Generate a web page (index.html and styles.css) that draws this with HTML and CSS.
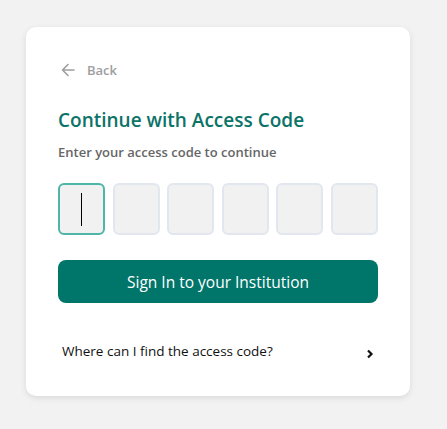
FILE: index.html
```html
<!DOCTYPE html>
<html>
<head>
<meta charset="utf-8">
<link rel="stylesheet" href="styles.css">
</head>
<body>
<div class="card">
  <div class="back">
    <svg class="back-icon" width="14" height="14" viewBox="0 0 14 14"><path d="M13 7H1.5M7 1.5L1.5 7L7 12.5" fill="none" stroke="#9e9e9e" stroke-width="1.6" stroke-linecap="round" stroke-linejoin="round"/></svg>
    <span class="back-text">Back</span>
  </div>
  <h1 class="title">Continue with Access Code</h1>
  <p class="subtitle">Enter your access code to continue</p>
  <div class="code">
    <div class="cell active"><span class="caret"></span></div>
    <div class="cell"></div>
    <div class="cell"></div>
    <div class="cell"></div>
    <div class="cell"></div>
    <div class="cell"></div>
  </div>
  <button class="btn">Sign In to your Institution</button>
  <div class="help">
    <span class="help-text">Where can I find the access code?</span>
    <svg class="chev" width="8" height="10" viewBox="0 0 8 10"><path d="M2 1.5L5.5 5L2 8.5" fill="none" stroke="#111" stroke-width="2.2"/></svg>
  </div>
</div>
</body>
</html>
```
FILE: styles.css
```css
* { box-sizing: border-box; }
html, body { margin: 0; padding: 0; }
body {
  background: #f2f2f2;
  font-family: "Open Sans", "Noto Sans", sans-serif;
  width: 447px;
  height: 429px;
  overflow: hidden;
}
.card {
  margin: 27px 0 0 26px;
  width: 384px;
  height: 369px;
  background: #fff;
  border-radius: 10px;
  box-shadow: 0 2px 6px rgba(0,0,0,0.10);
  padding: 32px 32px 0 32px;
}
.back {
  display: flex;
  align-items: center;
  height: 22px;
  padding-left: 3px;
}
.back-icon { display: block; }
.back-text {
  margin-left: 12px;
  font-size: 13px;
  font-weight: 600;
  color: #9e9e9e;
}
.title {
  margin: 26px 0 0 0;
  font-size: 19px;
  line-height: 26px;
  font-weight: 600;
  color: #0b7367;
}
.subtitle {
  margin: 9px 0 0 0;
  font-size: 13px;
  line-height: 20px;
  font-weight: 600;
  color: #666;
}
.code {
  margin-top: 21px;
  display: flex;
  gap: 7.6px;
}
.cell {
  width: 47px;
  height: 52px;
  border: 2px solid #e2e7ef;
  background: #f1f1f1;
  border-radius: 6px;
  display: flex;
  align-items: center;
  justify-content: center;
}
.cell.active { border-color: #4db6a8; }
.caret {
  width: 1.5px;
  height: 33px;
  background: #000;
}
.btn {
  display: block;
  margin-top: 25px;
  width: 320px;
  height: 43px;
  border: none;
  border-radius: 8px;
  background: #00756a;
  color: #fff;
  font-family: inherit;
  font-size: 15.5px;
  padding: 0;
}
.help {
  margin-top: 38px;
  display: flex;
  align-items: center;
  justify-content: space-between;
  padding: 0 4px 0 4px;
  height: 20px;
}
.help-text {
  font-size: 13.5px;
  color: #111;
}
.chev { display: block; margin-top: 6px; }
```
